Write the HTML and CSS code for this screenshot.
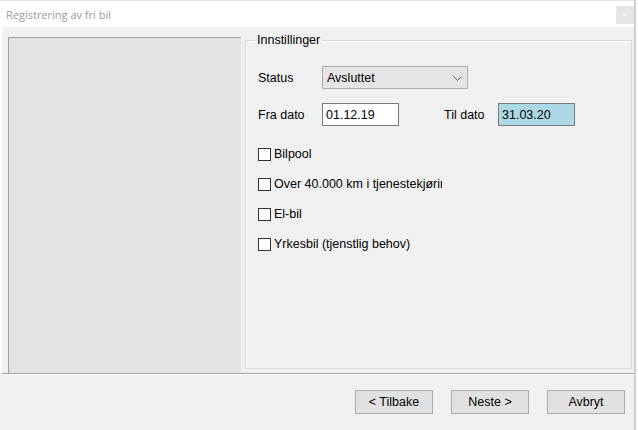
FILE: index.html
```html
<!DOCTYPE html>
<html lang="no">
<head>
<meta charset="utf-8">
<title>Registrering av fri bil</title>
<link rel="stylesheet" href="styles.css">
</head>
<body>
<div class="window">
  <div class="titlebar">
    <span class="title">Registrering av fri bil</span>
    <span class="close"><span class="close-mark"></span></span>
  </div>
  <div class="content">
    <div class="side-panel"></div>
    <div class="group">
      <div class="legend">Innstillinger</div>
      <div class="row row-status">
        <span class="label label-first">Status</span>
        <div class="combo">
          <span class="combo-text">Avsluttet</span>
          <svg class="chevron" width="9" height="5" viewBox="0 0 9 5"><path d="M0.5 0.5 L4.5 4.5 L8.5 0.5" fill="none" stroke="#606060" stroke-width="1"/></svg>
        </div>
      </div>
      <div class="row row-dates">
        <span class="label label-first">Fra dato</span>
        <div class="input">01.12.19</div>
        <span class="label label-til">Til dato</span>
        <div class="input input-selected">31.03.20</div>
      </div>
      <div class="checks">
        <div class="check-row"><span class="box"></span><span class="check-label">Bilpool</span></div>
        <div class="check-row"><span class="box"></span><span class="check-label clipped">Over 40.000 km i tjenestekjøring</span></div>
        <div class="check-row"><span class="box"></span><span class="check-label">El-bil</span></div>
        <div class="check-row"><span class="box"></span><span class="check-label">Yrkesbil (tjenstlig behov)</span></div>
      </div>
    </div>
  </div>
  <div class="footer">
    <button class="btn">&lt; Tilbake</button>
    <button class="btn">Neste &gt;</button>
    <button class="btn">Avbryt</button>
  </div>
</div>
</body>
</html>
```

FILE: styles.css
```css
html, body {
  margin: 0;
  padding: 0;
  width: 638px;
  height: 430px;
  overflow: hidden;
  background: #ffffff;
}

.window {
  width: 636px;
  height: 430px;
  border-right: 2px solid #cfcfcf;
  box-sizing: border-box;
  display: flex;
  flex-direction: column;
  font-family: "Liberation Sans", Arial, sans-serif;
  font-size: 12.5px;
  color: #000;
}

.titlebar {
  height: 27px;
  flex: none;
  background: #fff;
  border-top: 1px solid #e6e6e6;
  box-sizing: border-box;
  display: flex;
  align-items: center;
  justify-content: space-between;
  padding-left: 6px;
}

.title {
  font-family: "Open Sans", "Noto Sans", sans-serif;
  font-size: 11px;
  color: #9a9a9a;
  margin-top: 1px;
}

.close {
  width: 18px;
  height: 18px;
  background: #e6e6e6;
  display: flex;
  align-items: center;
  justify-content: center;
  margin-top: 1px;
}

.close-mark {
  width: 4px;
  height: 3px;
  background: #f2f2f2;
}

.content {
  height: 347px;
  flex: none;
  background: #f0f0f0;
  display: flex;
  align-items: flex-start;
  border-bottom: 1px solid #a5a5a5;
  box-sizing: border-box;
  margin-left: 2px;
  padding-left: 6px;
}

.side-panel {
  width: 233px;
  height: 336px;
  margin-top: 10px;
  background: #e3e3e3;
  border-left: 1px solid #a0a0a0;
  border-top: 1px solid #a0a0a0;
  box-sizing: border-box;
  flex: none;
}

.group {
  margin-top: 13px;
  margin-left: 4px;
  width: 387px;
  height: 329px;
  box-sizing: border-box;
  border: 1px solid #d7d7d7;
  box-shadow: inset 1px 1px 0 #ffffff;
  display: flex;
  flex-direction: column;
  padding-left: 12px;
}

.legend {
  align-self: flex-start;
  margin-top: -8px;
  margin-left: -3px;
  padding: 0 2px;
  line-height: 15px;
  background: #f0f0f0;
}

.row {
  display: flex;
  align-items: center;
  height: 23px;
}

.row-status {
  margin-top: 18px;
}

.row-dates {
  margin-top: 14px;
}

.label-first {
  width: 64px;
}

.label-til {
  width: 54px;
  margin-left: 45px;
}

.combo {
  width: 146px;
  height: 23px;
  box-sizing: border-box;
  background: #e5e5e5;
  border: 1px solid #adadad;
  display: flex;
  align-items: center;
  justify-content: space-between;
  padding: 0 5px 0 4px;
}

.chevron {
  display: block;
  margin-top: 1px;
}

.input {
  width: 77px;
  height: 23px;
  box-sizing: border-box;
  background: #fff;
  border: 1px solid #7a7a7a;
  display: flex;
  align-items: center;
  padding-left: 3px;
}

.input-selected {
  background: #add8e6;
}

.checks {
  margin-top: 13px;
  display: flex;
  flex-direction: column;
}

.check-row {
  height: 30px;
  display: flex;
  align-items: center;
}

.box {
  width: 13px;
  height: 13px;
  box-sizing: border-box;
  border: 1px solid #333;
  background: #fff;
  flex: none;
}

.check-label {
  margin-left: 3px;
  white-space: nowrap;
}

.clipped {
  width: 168px;
  overflow: hidden;
}

.footer {
  flex: 1;
  background: #f0f0f0;
  border-top: 1px solid #ffffff;
  display: flex;
  justify-content: flex-end;
  align-items: flex-start;
  gap: 18px;
  padding-top: 15px;
  padding-right: 9px;
}

.btn {
  width: 78px;
  height: 24px;
  background: #e1e1e1;
  border: 1px solid #adadad;
  font-family: "Liberation Sans", Arial, sans-serif;
  font-size: 12.5px;
  color: #000;
  padding: 0;
  margin: 0;
}
```
